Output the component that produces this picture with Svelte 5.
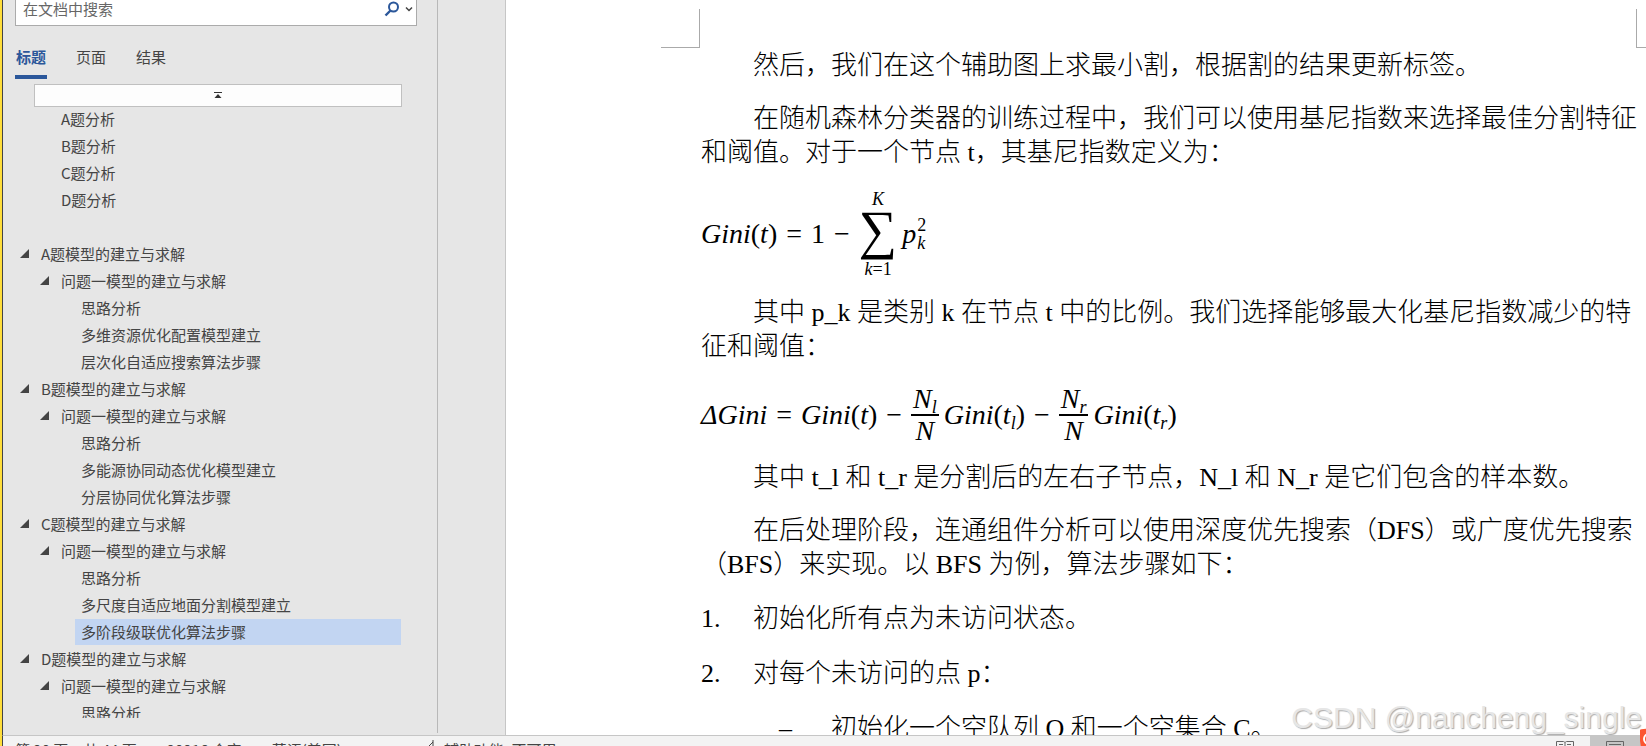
<script>
	let query = '';
	let tabs = ['标题', '页面', '结果'];
	let active = '标题';
	let selected = 19;

	const headings = [
		{ level: 2, text: 'A题分析' },
		{ level: 2, text: 'B题分析' },
		{ level: 2, text: 'C题分析' },
		{ level: 2, text: 'D题分析' },
		{ level: 1, text: '' },
		{ level: 1, text: 'A题模型的建立与求解', open: true },
		{ level: 2, text: '问题一模型的建立与求解', open: true },
		{ level: 3, text: '思路分析' },
		{ level: 3, text: '多维资源优化配置模型建立' },
		{ level: 3, text: '层次化自适应搜索算法步骤' },
		{ level: 1, text: 'B题模型的建立与求解', open: true },
		{ level: 2, text: '问题一模型的建立与求解', open: true },
		{ level: 3, text: '思路分析' },
		{ level: 3, text: '多能源协同动态优化模型建立' },
		{ level: 3, text: '分层协同优化算法步骤' },
		{ level: 1, text: 'C题模型的建立与求解', open: true },
		{ level: 2, text: '问题一模型的建立与求解', open: true },
		{ level: 3, text: '思路分析' },
		{ level: 3, text: '多尺度自适应地面分割模型建立' },
		{ level: 3, text: '多阶段级联优化算法步骤' },
		{ level: 1, text: 'D题模型的建立与求解', open: true },
		{ level: 2, text: '问题一模型的建立与求解', open: true },
		{ level: 3, text: '思路分析' }
	];
</script>

<div class="app" lang="zh-CN">
	<div class="workspace">
		<aside>
			<form class="search" on:submit|preventDefault>
				<input bind:value={query} placeholder="在文档中搜索" aria-label="在文档中搜索" />
				<button type="submit" aria-label="搜索">
					<svg width="16" height="16" viewBox="0 0 16 16" fill="none" stroke="#2b579a">
						<circle cx="9.5" cy="6" r="4.5" stroke-width="2" />
						<path d="M6.5 9.5 1.5 14.5" stroke-width="2.4" />
					</svg>
				</button>
				<button type="button" aria-label="搜索选项">
					<svg width="8" height="6" viewBox="0 0 8 6" fill="none" stroke="#444" stroke-width="1.5">
						<path d="M1 1.5 4 4.5 7 1.5" />
					</svg>
				</button>
			</form>
			<nav class="tabs">
				{#each tabs as tab}
					<button type="button" class:active={tab === active} on:click={() => (active = tab)}>{tab}</button>
				{/each}
			</nav>
			<button type="button" class="top" aria-label="跳转到开头">
				<svg width="8" height="7" viewBox="0 0 8 7" fill="#333">
					<path d="M0 0h8v1H0zM4 2 7.5 6h-7z" />
				</svg>
			</button>
			<ul class="tree">
				{#each headings as item, i}
					<li class="level{item.level}">
						{#if item.open}
							<svg class="arrow" width="9" height="9" viewBox="0 0 9 9"><path d="M9 0v9H0z" fill="#444" /></svg>
						{/if}
						{#if item.text}
							<button type="button" class:selected={i === selected} on:click={() => (selected = i)}>{item.text}</button>
						{/if}
					</li>
				{/each}
			</ul>
		</aside>
		<div class="gutter"></div>
		<main>
			<i class="corner left"></i>
			<i class="corner right"></i>
			<article>
				<p>然后，我们在这个辅助图上求最小割，根据割的结果更新标签。</p>
				<p>在随机森林分类器的训练过程中，我们可以使用基尼指数来选择最佳分割特征和阈值。对于一个节点 t，其基尼指数定义为：</p>
				<div class="math sum-line">
					<span><i>Gini</i>(<i>t</i>)</span>
					<span>=</span>
					<span>1</span>
					<span>−</span>
					<span class="sum">
						<small><i>K</i></small>
						<b>∑</b>
						<small><i>k</i>=1</small>
					</span>
					<span class="term"><i>p</i><span class="scripts"><small>2</small><small><i>k</i></small></span></span>
				</div>
				<p>其中 p_k 是类别 k 在节点 t 中的比例。我们选择能够最大化基尼指数减少的特征和阈值：</p>
				<div class="math">
					<span><i>ΔGini</i></span>
					<span>=</span>
					<span><i>Gini</i>(<i>t</i>)</span>
					<span>−</span>
					<span class="term">
						<span class="frac"><i>N<sub>l</sub></i><i>N</i></span>
						<span><i>Gini</i>(<i>t<sub>l</sub></i>)</span>
					</span>
					<span>−</span>
					<span class="term">
						<span class="frac"><i>N<sub>r</sub></i><i>N</i></span>
						<span><i>Gini</i>(<i>t<sub>r</sub></i>)</span>
					</span>
				</div>
				<p>其中 t_l 和 t_r 是分割后的左右子节点，N_l 和 N_r 是它们包含的样本数。</p>
				<p>在后处理阶段，连通组件分析可以使用深度优先搜索（DFS）或广度优先搜索（BFS）来实现。以 BFS 为例，算法步骤如下：</p>
				<div class="step"><span>1.</span>初始化所有点为未访问状态。</div>
				<div class="step"><span>2.</span>对每个未访问的点 p：</div>
				<div class="step sub"><span>–</span>初始化一个空队列 Q 和一个空集合 C。</div>
			</article>
		</main>
	</div>
	<footer>
		<span>第 20 页，共 44 页</span>
		<span>20216 个字</span>
		<span>英语(美国)</span>
		<span class="access">
			<svg width="14" height="16" viewBox="0 0 14 16" fill="none" stroke="#444"><path d="M9 1v6M9 3 3 9l5 4" /></svg>
			辅助功能: 不可用
		</span>
		<div class="views">
			<button type="button" aria-label="阅读视图">
				<svg width="18" height="14" viewBox="0 0 18 14" fill="none" stroke="#666">
					<path d="M.5.5h7l1.5 1 1.5-1h7v12H.5zM9 2v11M3 3.5h4M11 3.5h4M3 6.5h4M11 6.5h4" />
				</svg>
			</button>
			<button type="button" class="on" aria-label="页面视图">
				<svg width="18" height="14" viewBox="0 0 18 14" fill="none" stroke="#666">
					<path d="M.5.5h17v13H.5zM3 3.5h12M3 6.5h12" />
				</svg>
			</button>
		</div>
	</footer>
	<div class="watermark">CSDN @nancheng_single</div>
	<svg class="badge" width="24" height="24" viewBox="0 0 24 24">
		<rect width="24" height="24" rx="3" fill="#fc5531" transform="rotate(-8 12 12)" />
		<circle cx="9" cy="11" r="5" fill="none" stroke="#fff" stroke-width="2" />
	</svg>
</div>

<style>
	:global(body) {
		overflow: hidden;
	}
	.app {
		position: relative;
		box-sizing: border-box;
		display: flex;
		flex-direction: column;
		height: calc(100vh + 16px);
		border-left: 2px solid #ffde3b;
		font-family: 'Noto Sans CJK SC', sans-serif;
		font-size: 15px;
		color: #444;
		background: #e6e6e6;
		text-spacing-trim: space-all;
	}
	button {
		padding: 0;
		border: none;
		background: none;
		color: inherit;
		font: inherit;
	}
	svg {
		display: block;
	}
	.workspace {
		flex: 1;
		min-height: 0;
		display: flex;
		border-left: 1px solid #444;
	}
	aside {
		flex: none;
		box-sizing: border-box;
		width: 435px;
		display: flex;
		flex-direction: column;
		margin-bottom: 2px;
		padding: 0 20px 15px 12px;
		border-right: 1px solid #b8b8b8;
	}
	.search {
		flex: none;
		box-sizing: border-box;
		height: 26px;
		display: flex;
		align-items: center;
		gap: 5px;
		padding: 0 3px 7px 7px;
		border: 1px solid #ababab;
		border-top: none;
		background: #fff;
	}
	input {
		flex: 1;
		min-width: 0;
		padding: 0;
		border: none;
		outline: none;
		font: inherit;
		line-height: 20px;
	}
	input::placeholder {
		color: #666;
	}
	.tabs {
		display: flex;
		gap: 28px;
		margin-top: 19px;
	}
	.tabs button {
		box-sizing: border-box;
		height: 34px;
		padding: 0 1px 9px;
		border-bottom: 4px solid transparent;
		line-height: 24px;
	}
	.tabs .active {
		border-color: #2b579a;
		color: #2b579a;
		font-weight: bold;
	}
	.top {
		flex: none;
		height: 23px;
		margin: 5px 15px 0 19px;
		border: 1px solid #c0c0c0;
		background: #fdfdfd;
		display: flex;
		align-items: center;
		justify-content: center;
	}
	.tree {
		flex: 1;
		min-height: 0;
		overflow: hidden;
		list-style: none;
		margin: -2px 16px 0 0;
		padding: 0;
	}
	li {
		display: flex;
		align-items: center;
		justify-content: flex-end;
		height: 27px;
	}
	.arrow {
		flex: none;
		margin-right: 6px;
	}
	li button {
		flex: 1;
		padding-left: 6px;
		text-align: left;
		line-height: 26px;
	}
	.level1 {
		padding-left: 5px;
	}
	.level2 {
		padding-left: 25px;
	}
	.level2 button:first-child {
		margin-left: 15px;
	}
	.level3 {
		padding-left: 60px;
	}
	.selected {
		background: #c2d5f2;
	}
	.gutter {
		flex: none;
		width: 67px;
		border-right: 1px solid #c6c6c6;
	}
	main {
		flex: 1;
		min-width: 0;
		position: relative;
		overflow: hidden;
		background: #fff;
	}
	.corner {
		position: absolute;
		top: 9px;
		width: 38px;
		height: 38px;
		border-bottom: 1px solid #aaa;
	}
	.corner.left {
		left: 155px;
		border-right: 1px solid #aaa;
	}
	.corner.right {
		right: -29px;
		border-left: 1px solid #aaa;
	}
	article {
		display: flex;
		flex-direction: column;
		gap: 19px;
		padding: 49px 8px 0 195px;
		font: 26px/34px 'Liberation Serif', 'Noto Sans CJK SC', serif;
		font-weight: 300;
		color: #000;
	}
	p {
		margin: 0;
		text-indent: 2em;
	}
	.math {
		box-sizing: border-box;
		display: flex;
		align-items: center;
		gap: 9px;
		height: 59px;
		padding-top: 5px;
		font-size: 28px;
		white-space: nowrap;
	}
	.sum-line {
		height: 88px;
		padding-top: 2px;
	}
	small {
		font-size: 18px;
		line-height: 20px;
	}
	.sum {
		display: flex;
		flex-direction: column;
		align-items: center;
	}
	.sum b {
		margin-bottom: 8px;
		font-size: 54px;
		font-weight: 400;
		line-height: 42px;
	}
	.term {
		display: flex;
		align-items: center;
		gap: 5px;
	}
	.sum-line .term {
		gap: 1px;
		margin-left: -4px;
	}
	.scripts {
		display: flex;
		flex-direction: column;
	}
	.scripts small {
		line-height: 18px;
	}
	.frac {
		display: flex;
		flex-direction: column;
		align-items: center;
		line-height: 30px;
	}
	.frac i:first-child {
		padding: 0 2px;
		border-bottom: 2px solid #000;
	}
	sub {
		font-size: 18px;
		line-height: 0;
		vertical-align: -5px;
	}
	.step {
		display: flex;
		line-height: 36px;
	}
	.step span {
		width: 52px;
	}
	.sub {
		padding-left: 78px;
	}
	footer {
		flex: none;
		box-sizing: border-box;
		height: 27px;
		display: flex;
		align-items: center;
		gap: 30px;
		padding-left: 12px;
		border-top: 1px solid #c6c6c6;
		border-left: 1px solid #444;
		background: #f3f3f3;
	}
	.access {
		display: flex;
		gap: 6px;
		margin-left: 52px;
	}
	.views {
		display: flex;
		align-self: stretch;
		margin-left: auto;
	}
	.views button {
		display: flex;
		justify-content: center;
		width: 50px;
		padding-top: 5px;
	}
	.views .on {
		width: 56px;
		padding-right: 6px;
		background: #c6c6c6;
	}
	.watermark {
		position: absolute;
		right: 4px;
		bottom: 25px;
		font: 30px/38px 'Liberation Sans', sans-serif;
		color: #e6e6e6;
		text-shadow: 1px 1px 1px #aaa;
	}
	.badge {
		position: absolute;
		right: -18px;
		bottom: 10px;
	}
</style>
